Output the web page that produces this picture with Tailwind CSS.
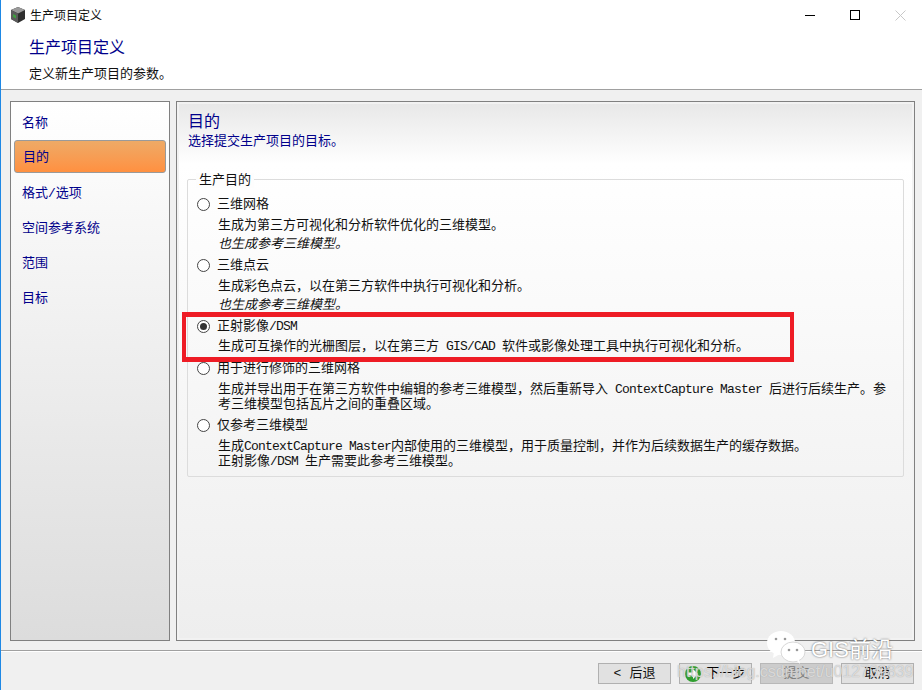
<!doctype html>
<html lang="zh-CN">
  <head>
    <meta charset="UTF-8" />
    <title>生产项目定义</title>
    <script src="https://cdn.jsdelivr.net/npm/@tailwindcss/browser@4"></script>
  </head>
  <body>
    <div class="relative flex h-[690px] w-[922px] flex-col overflow-hidden border-l border-l-[#1e88e5] bg-[#f0f0f0] font-['Liberation_Mono','Noto_Sans_CJK_SC',monospace] text-[13px] leading-[15px] text-[#111]">
      <!-- title bar + header -->
      <div class="h-[90px] shrink-0 border-b border-[#a0a0a0] bg-white">
        <div class="flex h-[30px] items-center pl-[9px]">
          <svg width="16" height="16" viewBox="0 0 16 16">
            <path d="M8 0l7 3v9l-7 4-7-4V3z" fill="#2e2e2e" />
            <path d="M8 0l7 3-7 3.500L1 3z" fill="#9a9a9a" />
            <path d="M1 3l7 3.500V16l-7-4z" fill="#5b5b5b" />
            <path d="M3 7l3 1.500v3L3 10z" fill="#3f9f3f" />
          </svg>
          <span class="ml-[4px] mt-[4px] text-[12px]">生产项目定义</span>
          <div class="ml-auto flex items-center">
            <div class="mr-[35px] h-px w-[10px] bg-black"></div>
            <div class="mr-[35px] h-[10px] w-[10px] border border-black"></div>
            <svg class="mr-[16px]" width="11" height="11" viewBox="0 0 11 11"><path d="M0.5 0.5l10 10M10.5 0.5l-10 10" stroke="#c8c8c8" fill="none" /></svg>
          </div>
        </div>
        <div class="pl-[28px] pt-[9px] text-[16px] leading-[20px] text-[#00008b]">生产项目定义</div>
        <div class="pl-[28px] pt-[8px]">定义新生产项目的参数。</div>
      </div>

      <div class="flex h-[560px] shrink-0 gap-[6px] pl-[9px] pt-[11px]">
        <!-- steps -->
        <div class="flex h-[540px] w-[160px] flex-col border border-[#808080] bg-linear-to-b from-white to-[#dcdcdc] px-[3px] pt-[5px] text-[#00008b]">
          <div class="flex h-[33px] shrink-0 items-center pl-[8px]">名称</div>
          <div class="flex h-[33px] shrink-0 items-center rounded-[3px] border border-[#9a9a9a] bg-linear-to-b from-[#eeaa66] to-[#ff9040] pl-[8px] pt-[2px]">目的</div>
          <div class="flex h-[35px] shrink-0 items-center pl-[8px] pt-[5px]">格式/选项</div>
          <div class="flex h-[35px] shrink-0 items-center pl-[8px] pt-[5px]">空间参考系统</div>
          <div class="flex h-[35px] shrink-0 items-center pl-[8px] pt-[5px]">范围</div>
          <div class="flex h-[35px] shrink-0 items-center pl-[8px] pt-[5px]">目标</div>
        </div>

        <!-- page -->
        <div class="flex h-[540px] w-[739px] flex-col border border-[#808080] bg-[#f2f2f2] p-[2px]">
          <div class="h-[60px] shrink-0 bg-linear-to-b from-[#e8e8e8] to-white pl-[9px] pt-[9px] text-[#00008b]">
            <div class="text-[16px] leading-[20px]">目的</div>
            <div class="pt-px">选择提交生产项目的目标。</div>
          </div>
          <div class="flex-1 bg-linear-to-b from-white to-[#eeeeee] pl-[8px] pt-[15px]">
            <!-- group box -->
            <div class="relative h-[298px] w-[717px] rounded-[2px] border border-[#dcdcdc] pl-[9px] pt-[17px]">
              <div class="absolute left-[8px] top-[-7px] bg-[#fdfdfd] px-[3px]">生产目的</div>
              <div class="flex h-[15px] items-center gap-[7px]"><span class="h-[13px] w-[13px] rounded-full border border-[#444] bg-white"></span><span>三维网格</span></div>
              <div class="ml-[21px] mt-[6px]">生成为第三方可视化和分析软件优化的三维模型。</div>
              <div class="ml-[21px] mt-[4px] italic">也生成参考三维模型。</div>
              <div class="mt-[6px] flex h-[15px] items-center gap-[7px]"><span class="h-[13px] w-[13px] rounded-full border border-[#444] bg-white"></span><span>三维点云</span></div>
              <div class="ml-[21px] mt-[6px]">生成彩色点云，以在第三方软件中执行可视化和分析。</div>
              <div class="ml-[21px] mt-[4px] italic">也生成参考三维模型。</div>
              <div class="mt-[6px] flex h-[15px] items-center gap-[7px]"><span class="flex h-[13px] w-[13px] items-center justify-center rounded-full border border-[#444] bg-white"><span class="h-[7px] w-[7px] rounded-full bg-[#333]"></span></span><span>正射影像<span class="tracking-[-0.8px]">/DSM</span></span></div>
              <div class="ml-[21px] mt-[5px] whitespace-nowrap">生成可互操作的光栅图层，以在第三方<span class="tracking-[-0.8px]"> GIS/CAD </span>软件或影像处理工具中执行可视化和分析。</div>
              <div class="mt-[7px] flex h-[15px] items-center gap-[7px]"><span class="h-[13px] w-[13px] rounded-full border border-[#444] bg-white"></span><span>用于进行修饰的三维网格</span></div>
              <div class="ml-[21px] mt-[6px] whitespace-nowrap">生成并导出用于在第三方软件中编辑的参考三维模型，然后重新导入<span class="tracking-[-0.8px]"> ContextCapture Master </span>后进行后续生产。参<br />考三维模型包括瓦片之间的重叠区域。</div>
              <div class="mt-[6px] flex h-[15px] items-center gap-[7px]"><span class="h-[13px] w-[13px] rounded-full border border-[#444] bg-white"></span><span>仅参考三维模型</span></div>
              <div class="ml-[21px] mt-[6px] whitespace-nowrap">生成<span class="tracking-[-0.8px]">ContextCapture Master</span>内部使用的三维模型，用于质量控制，并作为后续数据生产的缓存数据。<br />正射影像<span class="tracking-[-0.8px]">/DSM </span>生产需要此参考三维模型。</div>
            </div>
          </div>
        </div>
      </div>

      <!-- footer -->
      <div class="flex-1 border-t border-t-[#a0a0a0]">
        <div class="h-px bg-white"></div>
        <div class="flex justify-end gap-[8px] pr-[8px] pt-[11px]">
          <div class="flex h-[21px] w-[73px] items-center justify-center gap-[8px] border border-[#b0b0b0] bg-[#e1e1e1]"><span>&lt;</span><span>后退</span></div>
          <div class="flex h-[21px] w-[73px] items-center justify-center gap-[5px] border border-[#b0b0b0] bg-[#e1e1e1]">
            <svg width="16" height="16" viewBox="0 0 16 16"><circle cx="8" cy="8" r="8" fill="#2e9e2e" /><path d="M3 6.500h5V3l5 5-5 5V9.500H3z" fill="#fff" /></svg>
            <span class="text-black">下一步</span>
          </div>
          <div class="flex h-[21px] w-[73px] items-center justify-center border border-[#b8b8b8] bg-[#cccccc] text-[#808080]">提交</div>
          <div class="flex h-[21px] w-[73px] items-center justify-center border border-[#b0b0b0] bg-[#e1e1e1]">取消</div>
        </div>
      </div>

      <!-- red annotation -->
      <div class="absolute left-[181px] top-[312px] h-[50px] w-[612px] border-x-[4px] border-y-[5px] border-[#ee1c25]"></div>

      <!-- watermark -->
      <svg class="absolute left-[765px] top-[631px]" width="46" height="34" viewBox="0 0 46 34">
        <ellipse cx="15" cy="12" rx="14" ry="12" fill="#fff" />
        <path d="M8 21l-1 6 7-4z" fill="#fff" />
        <ellipse cx="27" cy="21" rx="12" ry="10" fill="#fff" stroke="#d8d8d8" />
        <path d="M31 30l3 3-1-5z" fill="#fff" />
        <circle cx="10" cy="8" r="1.300" fill="#999" /><circle cx="19" cy="8" r="1.300" fill="#999" />
        <circle cx="23" cy="19" r="1.300" fill="#999" /><circle cx="31" cy="19" r="1.300" fill="#999" />
      </svg>
      <div class="absolute left-[810px] top-[637px] font-['Liberation_Sans','Noto_Sans_CJK_SC',sans-serif] text-[22px] leading-[26px] text-white [text-shadow:0_0_2px_#555]">GIS前沿</div>
      <div class="absolute left-[676px] top-[664px] font-['Liberation_Sans',sans-serif] text-[16px] leading-[16px] text-white/60 [text-shadow:0_0_1px_#999]">https://blog.csdn.net/u012739839</div>
    </div>
  </body>
</html>
